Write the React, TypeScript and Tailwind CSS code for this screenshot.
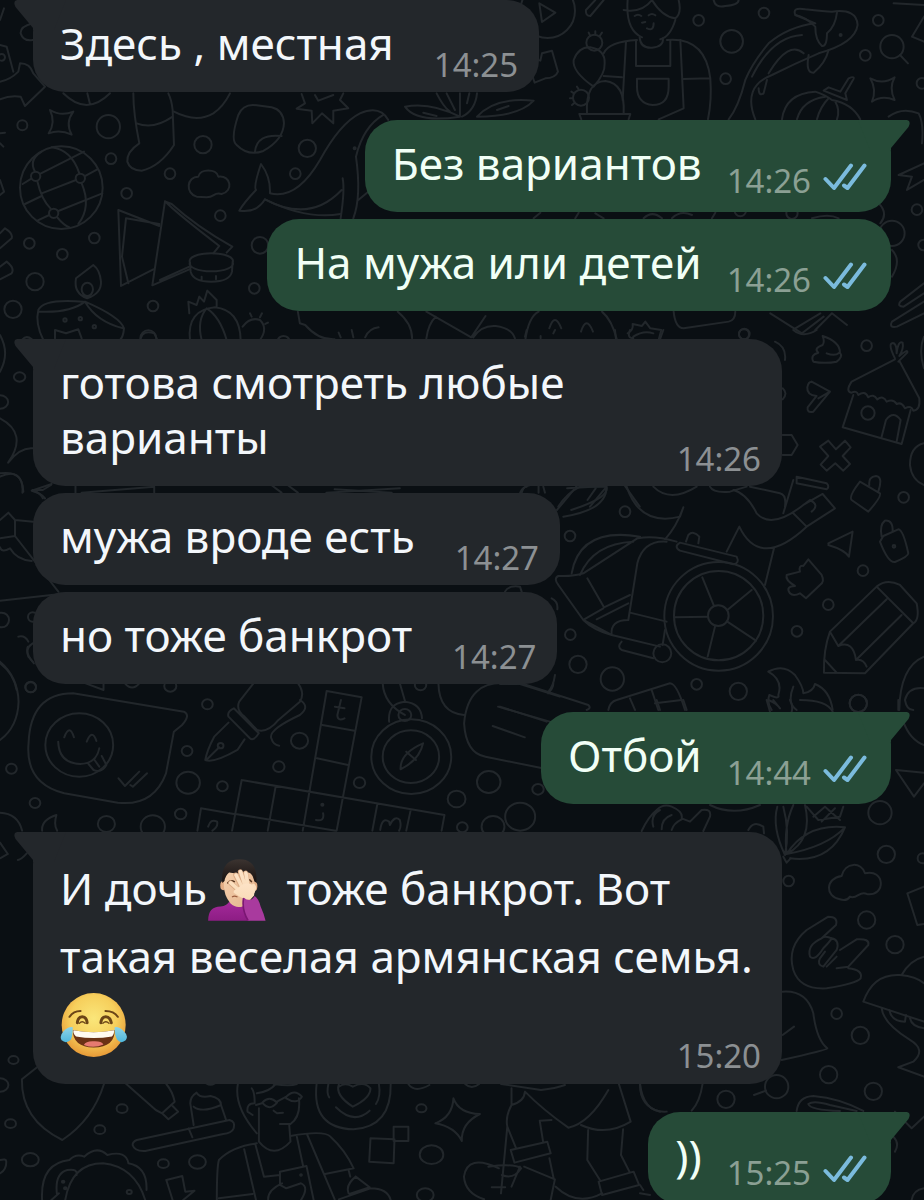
import type { ReactNode } from "react";

type Dot = [number, number, number];

function Doodles({
  transform,
  dots = [],
  paths,
}: {
  transform: string;
  dots?: Dot[];
  paths: string[];
}) {
  return (
    <g transform={transform}>
      {dots.map(([x, y, r], i) => (
        <circle key={i} cx={x} cy={y} r={r} vectorEffect="non-scaling-stroke" />
      ))}
      {paths.map((d, i) => (
        <path key={i} d={d} vectorEffect="non-scaling-stroke" />
      ))}
    </g>
  );
}

function Wallpaper() {
  return (
    <svg
      aria-hidden="true"
      className="absolute inset-0 h-full w-full"
      viewBox="0 0 924 1200"
      preserveAspectRatio="xMidYMin slice"
      fill="none"
      stroke="#22272b"
      strokeWidth="2"
      strokeLinecap="round"
      strokeLinejoin="round"
    >
      {/* globe, sock, whale, samosas, candle */}
      <Doodles
        transform="scale(.3333)"
        dots={[
          [67, 376, 15], [325, 380, 35], [333, 476, 16], [609, 434, 26], [510, 521, 16], [380, 580, 16],
          [661, 647, 16], [922, 445, 26], [886, 521, 16], [88, 730, 16], [283, 714, 16], [187, 763, 16],
          [105, 845, 26], [39, 928, 26], [459, 918, 16], [780, 736, 25], [763, 865, 16], [445, 1015, 24],
          [184, 563, 124], [107, 529, 14], [241, 535, 14], [161, 640, 14], [1064, 445, 3], [195, 960, 5],
          [241, 956, 5], [283, 980, 5], [5, 172, 10],
        ]}
        paths={[
          "M68 552L94 536M120 522L252 455M125 580L228 540M75 612L125 588M256 528L292 508M112 662L148 645M175 633L307 580",
          "M125 455Q85 480 105 515M112 544Q125 600 152 626M172 652Q190 675 210 683M155 442Q215 450 238 520M245 550Q275 620 235 672",
          "M150 330Q183 350 220 335Q195 368 215 404Q180 388 146 400Q168 368 150 330Z",
          "M400 280Q400 340 418 430Q380 455 382 485Q390 512 425 512Q480 500 522 435L518 330Q515 300 505 280M410 370Q460 390 518 350",
          "M522 335Q590 370 640 340Q670 320 690 280M190 280Q260 350 330 280M262 280L270 312",
          "M770 316Q730 310 715 345Q690 420 710 435Q745 470 790 453Q850 420 852 370Q850 330 815 322ZM765 455Q770 400 845 408",
          "M905 282L915 310L890 326L935 332L937 370L966 340L1000 370L1000 332L1045 325L1020 300L1030 280M945 285L955 302L1000 285",
          "M1165 360Q1140 315 1080 340Q1020 370 960 480Q890 600 810 580Q812 530 783 492Q760 560 768 570Q730 610 718 632Q770 640 795 598Q920 660 1022 642",
          "M795 598Q930 670 1025 570M1028 535Q1035 570 1022 655M1060 655Q1085 590 1068 470Q1090 380 1150 345M1075 600L1105 575L1160 625",
          "M590 590C555 580 560 530 595 530C600 505 650 505 655 530C695 525 700 575 665 582C640 575 645 592 620 592Z",
          "M355 630L363 858L460 808M355 630L478 678M378 655L366 770L385 850M378 655L478 672",
          "M495 604L457 856L568 808M495 604L515 612Q590 680 697 740L680 758M495 604Q530 640 658 738L640 760M480 840L568 800",
          "M570 787A65 23 0 1 0 698 787A65 23 0 1 0 570 787L572 815Q580 845 634 845Q690 845 696 815L698 785M605 830V840M648 828V838",
          "M262 895Q220 880 228 835L280 795Q300 810 303 845Q305 880 262 895ZM245 868A17 20 0 1 0 279 868A17 20 0 1 0 245 868",
          "M250 905Q130 895 115 930Q105 970 130 1020M115 935Q210 940 255 905Q360 950 372 985Q370 1010 360 1020M255 905Q290 965 370 985M165 1015L165 990L198 1000L235 988L245 1015",
          "M568 940L565 905L590 915L598 890L612 905L622 872L650 900L650 918M570 1020Q560 930 645 922Q720 930 722 1020M605 1020Q590 960 620 925Q660 950 680 1020",
          "M728 980Q750 950 780 960Q805 985 780 1020M755 950L750 940M780 952L786 940M796 972L804 968",
          "M0 245Q30 240 55 215L60 190Q90 190 100 220L135 260L75 318L62 290Q30 285 0 298M0 135L20 140L40 215M0 60L12 25M98 70Q60 80 62 100Q70 125 98 120",
          "M0 700L15 685Q40 700 35 715L0 745M0 800L20 785Q45 805 35 820L0 838M0 540L12 575L0 585M0 400L15 398M0 430L10 440",
          "M1215 320Q1290 305 1380 350Q1250 370 1215 320ZM1270 338L1310 348M1310 280Q1330 320 1350 335M1340 280L1365 330M1380 280V350",
        ]}
      />
      {/* gardener, koi, pumpkin */}
      <Doodles
        transform="translate(462 0) scale(.3333)"
        dots={[
          [710, 61, 16], [906, 39, 16], [809, 124, 34], [791, 236, 16], [1249, 61, 16], [1210, 166, 16],
          [1290, 140, 35], [1380, 250, 16], [1365, 629, 16], [1290, 700, 38], [1385, 735, 16], [846, 1003, 15],
          [257, 32, 82], [397, 128, 24], [357, 293, 24], [1136, 105, 3], [835, 632, 17], [990, 640, 17],
        ]}
        paths={[
          "M1314 165L1338 190M232 10L280 38L240 66Z",
          "M497 0Q490 90 540 112M640 60Q625 110 595 118M485 30Q540 40 570 0Q600 50 640 55Q660 40 650 0M518 48Q528 40 538 48M560 46Q570 38 580 46M555 85Q575 95 575 70M540 68L550 66",
          "M533 112Q535 145 570 143Q605 140 603 115M425 160Q440 125 525 120M615 120Q730 110 745 235L662 237M745 235Q750 300 738 358M425 228L480 232",
          "M492 125L482 300M655 120L665 325L590 358M522 120V198H625V120M525 236H620V260Q620 315 572 315Q525 310 525 260Z",
          "M395 260Q330 215 335 180Q350 140 385 142Q430 150 428 190Q430 220 395 260M375 340Q370 245 430 243Q490 250 485 340M352 342H505L500 358M352 342L358 358",
          "M385 108L380 98M400 104V94M413 108L420 98M336 280L328 275M333 295H324M338 308L330 315M350 268L345 260",
          "M800 358Q830 320 850 240Q870 190 920 130Q980 80 1060 70L1000 45Q990 20 1030 28Q1090 35 1110 35Q1185 25 1187 75Q1180 130 1070 160Q1000 190 930 225Q840 260 880 358",
          "M870 230Q930 110 1020 105M890 265Q890 290 905 280L915 240M920 220Q980 120 1025 160M1040 165Q1030 220 1055 218Q1090 190 1100 150M1125 38Q1120 80 1095 100Q1095 140 1080 138Q1060 120 1060 80Q1030 50 1000 45",
          "M960 358Q970 280 1060 275Q1090 285 1110 300Q1170 310 1195 358M1005 358Q1020 300 1090 290M1065 358Q1075 320 1100 295M1120 305Q1135 330 1125 358M1085 272L1100 262L1135 275L1160 235Q1185 225 1170 245L1150 280L1155 300Z",
          "M1225 235Q1262 255 1298 232Q1280 265 1298 300Q1260 285 1230 305Q1245 270 1225 235Z",
          "M210 175L235 182L240 160L270 152L288 215Q280 235 250 235L218 248L210 225M45 350Q100 290 215 302Q170 350 45 350ZM105 330L140 318M0 350Q40 330 45 280M15 310L22 280",
          "M372 30L400 0M385 48L425 0M372 30Q370 48 385 48M755 0Q760 25 790 18Q830 15 830 0M1295 10L1386 15M1386 50L1350 110L1386 125",
          "M1280 350Q1320 320 1370 340Q1386 370 1380 430M1386 490L1310 525L1350 530L1335 570L1386 540M1250 610Q1280 640 1255 670M1290 750Q1320 780 1290 830",
          "M1386 850L1315 905Q1305 920 1325 920L1386 880M1386 905L1290 965Q1280 985 1305 980L1386 940",
          "M190 1020Q200 950 230 935M420 935Q450 960 465 1020M262 985Q278 935 298 985M357 995Q373 945 393 995M497 1000Q515 990 512 972L540 978L550 965L565 985L598 990L590 1020M635 935Q640 985 665 985L800 965Q820 960 820 935",
          "M925 940L1020 1000L1085 950M1000 985L1075 940M1060 990L1110 940L1155 975M215 655L235 638M340 655L350 638M400 640L425 655M545 655Q570 630 600 655M630 655Q655 630 690 645M750 655L760 638M1050 655Q1100 640 1130 655",
        ]}
      />
      {/* wheelchair, hut, padlocks, pencil */}
      <Doodles
        transform="translate(500 330) scale(.3333)"
        dots={[
          [733, 12, 16], [1100, 47, 16], [1104, 249, 20], [1211, 502, 16], [375, 545, 16], [210, 618, 16],
          [211, 914, 16], [234, 1003, 26], [337, 1047, 35], [590, 1063, 16], [715, 1084, 26], [1075, 1120, 26],
          [985, 824, 16], [891, 904, 16], [1089, 722, 16], [656, 859, 163], [656, 857, 134], [655, 857, 31],
          [487, 970, 27], [1182, 649, 4],
        ]}
        paths={[
          "M607 742L642 828M755 780L682 840M522 862L624 860M682 875L768 932M645 890L623 980M825 35Q860 50 855 90M848 175Q865 190 848 208",
          "M968 18Q975 35 968 45Q940 55 955 68Q930 75 940 95Q975 102 1010 95Q1030 80 1020 68Q1020 35 968 18M980 70Q1005 80 1018 68",
          "M1185 85Q1165 45 1175 40Q1190 35 1190 70Q1195 30 1208 38Q1212 55 1198 78Q1225 55 1222 68L1195 95M1185 88L1055 155Q1035 185 1055 188Q1070 180 1075 195Q1095 180 1105 202Q1120 190 1132 208Q1150 195 1160 215Q1180 205 1190 222Q1205 215 1215 235Q1235 225 1240 242Q1262 240 1258 205L1198 92",
          "M1060 195L1028 292L1205 342L1232 240M1145 320L1158 270Q1180 240 1202 270L1190 335",
          "M935 155L990 185L940 245Q920 250 923 232L950 198Q920 195 922 172Q925 155 935 155M955 205L990 185M848 315H875L893 345L875 375H848",
          "M960 350L985 332L1008 358L1035 332L1052 352L1028 378L1050 402L1030 422L1006 400L980 422L962 404L985 378Z",
          "M1080 455L1140 490Q1145 500 1105 545L1055 510Q1045 500 1080 455ZM1108 465Q1105 440 1128 438Q1150 440 1135 485",
          "M1145 620Q1138 585 1155 572Q1180 570 1178 605M1150 618L1195 598Q1210 600 1225 670Q1225 680 1185 696Q1165 700 1140 635ZM985 640L1058 605L1047 680Q1035 660 985 645M1035 608",
          "M925 688L965 735Q975 755 960 765L918 805L900 790Q880 800 870 790Q855 770 885 768Q855 750 860 735L900 725Q895 705 910 708Z",
          "M990 905Q970 960 972 1028L1095 1030L1240 880Q1260 870 1250 820L1200 765Q1160 745 1130 770ZM1130 770L1240 880M1160 808L1015 948M1205 855L1068 990M990 905L1015 948Q1060 930 1068 990Q1090 985 1100 1010M975 990L1010 1028",
          "M1272 980Q1200 1010 1198 1140M1272 1075Q1225 1070 1215 1110Q1220 1140 1240 1140M1272 340Q1230 350 1230 405Q1235 450 1272 465M1272 20Q1255 60 1272 115",
          "M380 470Q420 590 540 560L550 532M550 532Q530 590 495 628M460 470Q510 520 590 470M630 470Q640 490 690 485L740 470M700 480Q740 490 770 550Q815 600 910 525L930 510Q960 525 935 545M850 550L880 450M750 470L840 490Q860 495 855 530M890 440L980 460Q990 470 980 478L890 460ZM910 525L968 492L1005 535L920 590L880 550M920 590Q780 720 718 590L680 665M822 655L795 765",
          "M540 638L710 680Q720 700 700 703L540 662Q520 650 540 638M558 635L565 615Q580 600 598 620L595 640",
          "M215 730Q240 590 420 620L250 730Q220 740 175 738Q160 745 175 765L250 870L310 835M240 735Q280 640 400 635M262 745L312 832M415 625Q460 615 530 635M312 832L390 795M500 635Q430 630 412 700L385 870Q330 870 335 915L250 870M250 870Q280 900 335 915M290 868L385 820M390 848L500 875M335 915L480 950M365 935Q350 950 365 960L460 985M495 900L488 945",
          "M175 530Q200 490 240 470H320Q320 540 190 560M320 470L270 530M65 488Q70 470 80 470M130 470L135 488M15 785Q25 765 60 770L65 785M155 805Q175 815 172 838M165 1035Q160 1070 145 1085",
          "M0 1062H70L265 1125Q275 1135 260 1140M0 1130L140 1175M325 1140Q330 1115 350 1110L510 1060Q530 1060 555 1140M390 1105L405 1140M455 1080L475 1140",
          "M805 1025Q850 1000 885 1035Q910 1070 910 1090Q940 1085 945 1062Q990 1080 998 1140M805 1025Q850 1050 835 1095Q840 1110 808 1095Q800 1120 815 1140M880 1070Q860 1120 890 1140M80 0L75 20M165 0L160 10M345 0L348 28M390 0Q380 25 400 25M400 20Q430 0 460 10M490 0L480 28M880 0Q910 25 950 0",
        ]}
      />
      {/* chat sticker, fountain pen, crossword, compass */}
      <Doodles
        transform="translate(0 640) scale(.357 .3333)"
        dots={[
          [86, 142, 15], [32, 386, 15], [98, 489, 15], [581, 193, 15], [524, 333, 15], [623, 439, 15],
          [839, 302, 24], [527, 428, 33], [781, 380, 16], [1007, 428, 16], [1279, 477, 25], [1369, 426, 33],
          [1507, 448, 16], [1457, 530, 42], [1381, 560, 32], [1295, 562, 15], [506, 522, 16], [298, 552, 24],
          [428, 560, 34], [222, 315, 95], [1152, 350, 112], [1151, 350, 79], [1134, 225, 18], [618, 317, 8], [903, 494, 3],
          [477, 138, 17], [1178, 135, 16],
        ]}
        paths={[
          "M205 160L515 215Q535 225 510 255L487 275L465 400Q430 500 330 488L180 460Q70 430 80 310Q85 160 205 160Z",
          "M180 292Q195 250 207 292M243 305Q258 265 270 303M163 305Q165 370 225 372Q270 370 278 325M248 372L262 390Q285 400 298 375L285 348M265 360L278 380M332 415L350 438L390 395M365 435L372 440L412 400",
          "M0 65Q50 110 52 185Q50 260 0 300M78 20Q70 40 95 70M240 130L290 150V130M350 130Q370 155 390 130",
          "M710 130L670 185Q660 210 685 230L720 270Q750 280 780 240L840 185Q855 160 835 130M840 180Q870 200 840 225Q750 270 760 295Q765 315 782 317M655 205Q635 215 640 230L700 295Q710 305 725 280ZM640 248L600 290Q580 330 575 360Q600 370 665 330L685 298M580 358L614 322",
          "M915 153L1013 172L943 572M915 153L848 572M903 255L993 272M888 355L975 375M677 420L1245 525L1237 572M677 420L650 572M772 440L750 572M660 522L940 572M563 505L655 522M563 505L553 572M1057 492L1043 572M1150 512L1138 572",
          "M955 180L945 225Q945 245 965 235M938 200L965 205M905 520Q910 545 885 540M1065 570Q1070 530 1090 545L1092 555Q1105 525 1120 540Q1125 560 1118 572M583 560Q590 535 608 545Q612 560 595 572",
          "M1090 245Q1085 190 1134 185Q1180 190 1182 235M1072 130Q1075 190 1134 225M1120 130L1135 185M1185 310Q1120 340 1122 388Q1175 360 1185 310ZM1138 335L1165 360",
          "M1228 130Q1230 220 1300 225M1420 130Q1310 120 1300 250Q1305 340 1360 350L1520 385M1450 130L1568 170M1395 200L1540 245M1380 258L1470 292M1550 130Q1550 145 1535 160",
          "M118 572Q115 540 158 525Q150 555 160 572M0 518Q50 520 62 572M0 608L22 642L0 655M75 640Q60 658 50 660",
        ]}
      />
      {/* reading person, latte, skaters */}
      <Doodles
        transform="translate(0 1060) scale(.421 .3333)"
        dots={[
          [32, 0, 12], [0, 75, 20], [25, 191, 13], [290, 146, 13], [237, 209, 13], [72, 299, 20], [388, 311, 13],
          [469, 306, 20], [1001, 145, 12], [1025, 284, 28], [1010, 405, 20], [307, 396, 6], [715, 345, 2], [150, 365, 3], [155, 385, 3],
        ]}
        paths={[
          "M88 22L52 58Q50 180 148 240Q220 180 247 72M298 70L370 150L385 160L415 125Q410 95 395 72M385 160L400 178L423 155L410 138",
          "M460 195L452 130Q452 110 467 98Q475 115 500 108Q525 115 525 135L537 180M460 140Q480 160 525 135M325 240L545 180Q560 185 555 205Q550 220 530 222L345 273Q320 275 315 255Q315 245 325 240M448 205L457 232",
          "M565 72Q555 140 610 220M598 85Q605 95 605 130Q585 130 588 155L600 165M610 100Q640 95 655 72M650 72Q690 80 705 72M710 115Q715 170 690 192H665M615 145V245Q650 300 690 245L687 195M623 128Q640 105 658 128Q640 155 623 128M658 125L680 110M680 110Q700 85 717 110Q705 135 680 115M650 152L658 160L672 158M608 135L622 130",
          "M515 420Q515 320 520 300Q550 260 610 250M580 268L608 420M520 415L600 402M607 255L627 350L665 345M705 230L720 318M690 228Q770 210 785 230Q820 270 840 325L772 342M730 225L795 418M665 335L728 318L745 420M665 335V375L680 385L715 370Q735 380 715 420M670 370Q635 390 637 420M828 330L832 350M845 350Q820 375 828 400M845 350L878 382L830 402M805 418L880 385Q920 385 928 420",
          "M752 72Q740 205 840 208Q930 200 928 72M780 72Q775 100 782 112M900 72Q905 110 893 132M798 142Q840 195 878 152M805 72Q795 105 838 140Q880 115 880 85Q865 62 838 80Q820 65 805 80",
          "M935 200H970V243H935ZM880 235L937 238L935 310L877 305ZM970 72Q985 100 1020 75M1105 72Q1120 90 1138 72M490 70Q500 78 510 70",
          "M1077 115Q1090 160 1140 162Q1095 190 1097 243Q1080 200 1034 190Q1075 170 1077 115Z",
          "M1215 85V135Q1200 170 1205 200L1190 400M1205 200L1225 262M1190 72L1285 90Q1320 85 1342 75M1247 95Q1290 150 1350 203Q1400 190 1445 90M1247 95Q1245 125 1215 135M1470 72L1498 185Q1440 230 1380 195M1282 182L1310 180M1282 182L1290 245M1213 270L1300 245L1308 280L1222 308ZM1397 210L1395 300L1425 360M1480 208L1475 285L1495 335M1422 365L1505 335L1518 375L1430 405Z",
          "M1185 325Q1110 280 1102 350Q1105 400 1150 418M1160 320Q1220 310 1238 325Q1220 360 1192 345M1245 320L1318 358L1308 420M1320 380Q1370 440 1430 400M1168 382H1200M1235 320L1215 380M1305 295L1315 355M1520 72Q1520 140 1568 155",
          "M0 300Q15 295 15 305Q15 330 0 340M100 420Q95 310 165 300Q180 280 200 290Q230 255 255 285Q300 270 305 310Q350 320 348 390M155 420Q170 310 245 310Q320 320 345 420M135 400Q130 340 160 330Q185 325 182 345M395 360L433 348L440 395L462 392L435 420M395 360L410 420M122 420L140 400",
        ]}
      />
      {/* corn, cloud, hand, mushroom */}
      <Doodles
        transform="translate(640 700) scale(.3333)"
        dots={[
          [720, 338, 35], [739, 463, 26], [446, 543, 16], [680, 660, 26], [765, 734, 26], [590, 941, 16],
          [661, 1006, 26], [566, 1124, 26], [700, 1174, 26], [410, 1160, 35], [258, 1198, 26], [655, 10, 26],
          [848, 475, 15],
        ]}
        paths={[
          "M378 1172L342 1185M0 1150Q10 1240 80 1235M188 1150Q180 1205 155 1232M5 393Q25 350 50 330Q70 310 95 320Q130 335 125 355L150 365L185 330Q215 325 210 350L190 393M40 380Q30 345 60 330M65 388Q65 355 95 345M95 390Q100 370 125 358M210 315Q280 350 360 315M325 390Q340 360 370 380L372 400",
          "M412 320Q395 380 435 465Q450 395 430 320M460 315Q430 380 440 462Q520 420 495 315M440 462Q500 370 615 382Q570 490 450 475M440 462Q560 440 615 382M430 470L440 488L452 475M500 320L535 360L600 350L610 320M520 350L555 320L600 360M545 365L585 325",
          "M600 598C555 590 555 535 605 528C615 485 665 485 675 520C735 505 740 590 680 582C660 570 650 600 630 590Q620 605 600 598Z",
          "M460 810Q440 740 500 690L565 650Q595 650 588 675L545 715M545 715Q500 735 510 770Q525 785 550 745Q570 725 575 715Q555 705 545 715M575 715Q600 720 590 750L550 800Q530 795 540 775L555 755M590 770L560 800M600 750L650 718Q690 715 685 735L625 800L590 805M625 805Q670 810 662 835Q650 850 560 865Q480 870 460 810",
          "M670 905Q700 820 780 825Q830 830 852 850M670 905L852 965M785 825Q810 780 852 770M725 925Q730 970 810 1020Q860 1050 820 1085L775 1102L852 1130M748 930Q755 965 795 965L798 945M810 955Q815 980 852 985",
          "M428 875Q500 870 520 940Q530 1020 562 1045Q560 1050 425 1080M428 1005L462 980M470 1233Q475 1190 520 1188Q600 1195 670 1233M600 1233Q510 1230 505 1212Q520 1200 570 1215L650 1233M852 560L802 580L832 675L852 672M768 210L852 218M768 210L822 290L852 250M790 65Q810 120 852 135M775 30V0M760 1310Q780 1330 765 1355M765 1235L815 1285L852 1250M50 0L60 30M130 0L140 30M45 10L125 0M380 0L390 35M385 0Q410 10 420 25L400 0M450 0Q460 20 455 35M480 0Q560 0 578 35",
          "M815 1500Q820 1470 852 1465M0 1480L30 1485M0 1455L10 1470",
        ]}
      />
      <Doodles
        transform="translate(0 280) scale(.408 .3333)"
        dots={[[48, 291, 14], [0, 366, 20], [695, 182, 14]]}
        paths={[
          "M0 165Q25 220 0 275M0 415Q70 460 20 548M20 548Q50 500 82 505M0 580Q60 570 55 638M80 630H105L125 615M80 630Q100 640 105 655M185 615V638M200 638L378 620V638M665 615L690 638M705 615L730 638M800 638L980 625M820 628L960 638M1275 638Q1280 620 1300 615M1320 615V638M1365 690Q1400 640 1415 615M1390 625L1485 618Q1500 650 1400 690M1460 625L1440 660M1530 615L1568 680",
          "M730 95L735 130L748 135Q780 180 820 178M975 95Q1010 130 1010 175M1045 95L1155 172L1190 108M1045 175Q1050 130 1068 110M1160 172Q1180 135 1215 138Q1255 145 1262 175M830 158L835 172M862 150L866 172M895 172Q905 145 928 142M1325 168V175M55 178Q65 165 78 178M345 175Q350 150 378 160L385 178",
        ]}
      />
      <Doodles
        transform="translate(0 460) scale(.3333)"
        dots={[[5, 480, 22], [92, 681, 16], [98, 471, 14]]}
        paths={[
          "M0 50Q65 20 70 95M0 180L25 158L45 180L100 185M0 235L45 228V180M45 228L175 395M0 262Q5 280 30 265Q50 300 95 303M0 422L175 403M55 530Q75 525 85 545M98 550Q75 565 85 590L98 605M0 610Q40 640 50 690M95 92Q125 100 135 115M95 92L155 72",
        ]}
      />
    </svg>
  );
}

function FacepalmEmoji() {
  return (
    <svg
      role="img"
      aria-label="Фейспалм"
      viewBox="22 20 180 192"
      className="-mt-5 -mb-3 mr-2 inline-block h-[63px] w-[60px] align-middle"
    >
      <defs>
        <linearGradient id="skin" x1="0" y1="0" x2="1" y2="1">
          <stop offset="0" stopColor="#f6d3b0" />
          <stop offset="1" stopColor="#e3b28c" />
        </linearGradient>
        <linearGradient id="palm" x1="0" y1="0" x2="0" y2="1">
          <stop offset="0" stopColor="#fde3c6" />
          <stop offset="1" stopColor="#f9dcb9" />
        </linearGradient>
        <linearGradient id="shirt" x1="0" y1="0" x2="0" y2="1">
          <stop offset="0" stopColor="#a52a9b" />
          <stop offset="1" stopColor="#8d1d84" />
        </linearGradient>
        <linearGradient id="hair" x1="0" y1="0" x2="0" y2="1">
          <stop offset="0" stopColor="#3b3330" />
          <stop offset="1" stopColor="#17110f" />
        </linearGradient>
      </defs>
      <path d="M24 211Q24 168 62 168Q82 166 90 150L132 160L150 211Z" fill="url(#shirt)" />
      <ellipse cx="70" cy="104" rx="9" ry="14" fill="#e2ad85" />
      <ellipse cx="166" cy="106" rx="8" ry="14" fill="#e2ad85" />
      <path d="M72 70Q80 45 118 45Q164 45 166 100Q164 150 132 166Q110 176 92 158Q72 135 72 104Z" fill="url(#skin)" />
      <path d="M67 96Q62 24 120 24Q176 24 171 96L164 88Q160 68 148 64Q118 70 88 64Q76 74 74 90Z" fill="url(#hair)" />
      <path d="M84 96Q92 86 104 92M142 86Q152 84 156 92" stroke="#54351f" strokeWidth="5" fill="none" strokeLinecap="round" />
      <path d="M98 138Q104 134 112 138" stroke="#9c5f40" strokeWidth="4" fill="none" strokeLinecap="round" />
      <g stroke="#d9a982" strokeWidth="15" strokeLinecap="round" fill="none">
        <path d="M130 116L108 72M138 112L122 62M146 112L138 66M124 124L92 96" />
      </g>
      <g stroke="url(#palm)" strokeWidth="11" strokeLinecap="round" fill="none">
        <path d="M131 116L109 72M139 112L123 62M147 112L139 66M125 124L93 96M156 130Q170 112 162 104" />
      </g>
      <path d="M112 114Q134 92 156 100Q168 112 164 134Q152 150 138 146Q120 140 102 126Q100 118 112 114Z" fill="url(#palm)" />
      <path d="M132 140Q152 158 166 136Q178 144 184 168Q194 190 199 211H144Q128 180 132 140Z" fill="#a93a9e" />
      <path d="M132 142Q126 178 146 211" stroke="#7b1673" strokeWidth="5" fill="none" />
    </svg>
  );
}

function JoyEmoji() {
  return (
    <svg
      role="img"
      aria-label="Слёзы радости"
      viewBox="26 30 206 202"
      className="-mt-5 -mb-3 inline-block h-[66px] w-[68px] align-middle"
    >
      <defs>
        <radialGradient id="face" cx=".5" cy=".4" r=".6">
          <stop offset="0" stopColor="#fae67a" />
          <stop offset=".6" stopColor="#f6cf5c" />
          <stop offset="1" stopColor="#e79a37" />
        </radialGradient>
        <linearGradient id="tear" x1="0" y1="0" x2="0" y2="1">
          <stop offset="0" stopColor="#8fd3e6" />
          <stop offset="1" stopColor="#4fb7dc" />
        </linearGradient>
      </defs>
      <circle cx="128" cy="131" r="98" fill="url(#face)" />
      <g fill="none" strokeLinecap="round" stroke="#6b4517">
        <path d="M54 106Q66 88 88 88M164 88Q190 88 202 106" strokeWidth="6" />
        <path d="M78 124Q80 106 93 106Q106 106 108 124M150 124Q152 106 165 106Q178 106 182 124" strokeWidth="9" />
        <path d="M84 126Q93 116 102 126M156 126Q165 116 175 126" strokeWidth="4" />
      </g>
      <path d="M64 146Q128 160 192 146Q194 198 128 200Q64 198 64 146Z" fill="#6a3214" />
      <path d="M66 147Q128 160 190 147Q192 158 184 166Q128 176 74 166Q64 158 66 147Z" fill="#fffaf0" />
      <path d="M98 192Q104 180 128 181Q152 180 158 191Q128 204 98 192Z" fill="#e67a70" />
      <path d="M64 138Q52 134 36 150Q22 164 30 178Q44 190 58 176Q64 164 64 138Z" fill="url(#tear)" />
      <path d="M192 138Q204 134 220 150Q236 164 226 178Q212 190 200 176Q192 164 192 138Z" fill="url(#tear)" />
    </svg>
  );
}

function ReadTicks() {
  return (
    <svg
      role="img"
      aria-label="Прочитано"
      viewBox="0 0 44 28"
      className="h-7 w-11 shrink-0"
      fill="none"
      stroke="#7bbbdd"
      strokeWidth="4"
      strokeLinecap="round"
      strokeLinejoin="round"
    >
      <path d="M2.500 16L11 25L28 2.500M21 22.500L24.500 25L41.500 2.500" />
    </svg>
  );
}

type MessageProps = {
  children: ReactNode;
  time: string;
  outgoing?: boolean;
  tail?: boolean;
  long?: boolean;
  tall?: boolean;
};

function Message({ children, time, outgoing, tail, long, tall }: MessageProps) {
  const side = outgoing
    ? "self-end bg-[#264b38] pr-6 text-[#f1fff6]"
    : "self-start bg-[#23272b] pr-[21px] text-[#f3f7fb]";
  const body = long ? "grid max-w-[749px]" : outgoing ? "flex gap-[25px]" : "flex gap-10";
  const leading = tall ? "pt-[22px] pb-[26px] leading-[68px]" : "pt-4 pb-[21px] leading-[55px]";
  const timeDrop = tall ? "-mb-4" : outgoing ? "-mb-2" : "-mb-3";
  return (
    <li className={`relative rounded-[32px] pl-[27px] text-[44px] ${side} ${body} ${leading}`}>
      {tail && (
        <svg
          aria-hidden="true"
          viewBox="0 0 52 30"
          className={`absolute top-0 h-[30px] w-[52px] ${outgoing ? "-right-[19px] -scale-x-100" : "-left-[19px]"}`}
          fill={outgoing ? "#264b38" : "#23272b"}
        >
          <path d="M3 0H52L40 30H19V28L1.500 7Q-1.500 1 3 0Z" />
        </svg>
      )}
      <p className={`relative ${long ? "col-start-1 row-start-1" : ""}`}>{children}</p>
      <div
        className={`relative flex items-end gap-3 self-end ${long ? "col-start-1 row-start-1 justify-self-end" : ""} ${timeDrop}`}
      >
        <time className={`text-[33px] leading-9 ${outgoing ? "text-[#8ba094]" : "text-[#8c9093]"}`}>{time}</time>
        {outgoing && (
          <span className="pb-2">
            <ReadTicks />
          </span>
        )}
      </div>
    </li>
  );
}

export default function App() {
  return (
    <main className="relative h-screen overflow-hidden bg-[#0a0f13] font-['Noto_Sans',sans-serif]">
      <Wallpaper />
      <ol className="relative flex flex-col gap-7 pr-[33px] pl-[33px]">
        <Message time="14:25" tail>
          Здесь , местная
        </Message>
        <li>
          <ol className="flex flex-col gap-[7px]">
            <Message time="14:26" outgoing tail>
              Без вариантов
            </Message>
            <Message time="14:26" outgoing>
              На мужа или детей
            </Message>
          </ol>
        </li>
        <li>
          <ol className="flex flex-col gap-[7px]">
            <Message time="14:26" tail long>
              готова смотреть любые варианты
            </Message>
            <Message time="14:27">мужа вроде есть</Message>
            <Message time="14:27">но тоже банкрот</Message>
          </ol>
        </li>
        <Message time="14:44" outgoing tail>
          Отбой
        </Message>
        <Message time="15:20" tail long tall>
          И дочь
          <FacepalmEmoji /> тоже банкрот. Вот такая веселая армянская семья. <JoyEmoji />
        </Message>
        <Message time="15:25" outgoing tail>
          ))
        </Message>
      </ol>
    </main>
  );
}
